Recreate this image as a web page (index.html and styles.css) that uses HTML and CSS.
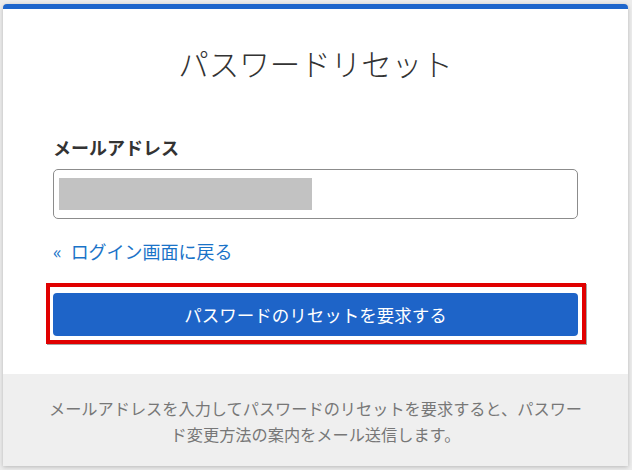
FILE: index.html
```html
<!DOCTYPE html>
<html lang="ja">
<head>
<meta charset="utf-8">
<title>パスワードリセット</title>
<link rel="stylesheet" href="styles.css">
</head>
<body>
<div class="card">
  <h1 class="title">パスワードリセット</h1>
  <form class="form">
    <label class="label">メールアドレス</label>
    <div class="input"><span class="redact"></span></div>
    <a class="back" href="#"><span class="chev">«</span>ログイン画面に戻る</a>
    <div class="highlight">
      <button type="button" class="submit">パスワードのリセットを要求する</button>
    </div>
  </form>
  <div class="footer">
    <p class="note">メールアドレスを入力してパスワードのリセットを要求すると、パスワード変更方法の案内をメール送信します。</p>
  </div>
</div>
</body>
</html>
```

FILE: styles.css
```css
* { box-sizing: border-box; }
html, body { margin: 0; padding: 0; }
body {
  background: #ececec;
  font-family: "Noto Sans CJK JP", "Noto Sans", sans-serif;
  color: #333;
  padding: 4px 4px 0 3px;
  height: 470px;
  overflow: hidden;
}
.card {
  width: 625px;
  height: 462px;
  background: #fff;
  border-top: 5px solid #1e66cc;
  border-radius: 4px 4px 0 0;
  box-shadow: 0 1px 4px rgba(0, 0, 0, 0.22);
  display: flex;
  flex-direction: column;
}
.title {
  margin: 32px 0 0;
  font-size: 30.5px;
  line-height: 45px;
  font-weight: 300;
  text-align: center;
  color: #333;
}
.form {
  display: flex;
  flex-direction: column;
  align-items: flex-start;
  padding: 0 47px 0 43px;
  margin-top: 48px;
}
.label {
  margin-left: 7px;
  font-size: 18px;
  line-height: 27px;
  font-weight: bold;
  color: #333;
}
.input {
  margin: 8px 0 0 7px;
  width: 525px;
  height: 50px;
  border: 1px solid #8c8c8c;
  border-radius: 5px;
  padding: 8px 5px;
  display: flex;
}
.redact {
  width: 253px;
  height: 32px;
  background: #c2c2c2;
}
.back {
  margin: 19px 0 0 7px;
  font-size: 18px;
  line-height: 26px;
  color: #1a73c8;
  text-decoration: none;
}
.chev {
  margin-right: 9px;
}
.highlight {
  margin-top: 19px;
  width: 540px;
  border: 4px solid #e00000;
  padding: 6px 4px 4px 3px;
  box-shadow: 1px 1px 0 rgba(0, 0, 0, 0.35);
  display: flex;
}
.submit {
  width: 525px;
  height: 43px;
  border: none;
  border-radius: 4px;
  background: #1e64c8;
  color: #fff;
  font-family: inherit;
  font-size: 17.5px;
  padding: 0;
}
.footer {
  margin-top: auto;
  height: 92px;
  background: #efefef;
  padding: 21px 44px 0;
}
.note {
  margin: 0;
  font-size: 16.2px;
  line-height: 26px;
  color: #777;
  text-align: center;
}
```
